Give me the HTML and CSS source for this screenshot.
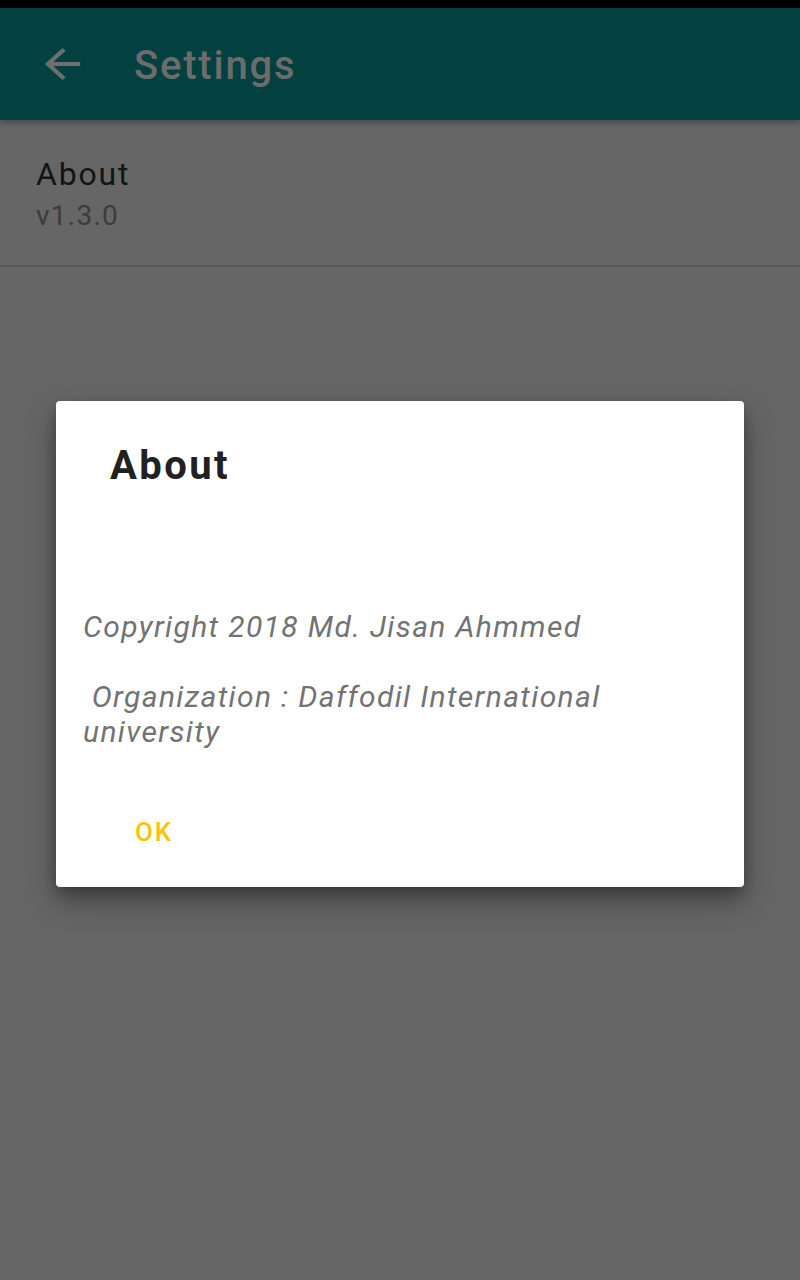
FILE: index.html
```html
<!DOCTYPE html>
<html>
<head>
<meta charset="utf-8">
<link rel="stylesheet" href="styles.css">
</head>
<body>
<div class="statusbar"></div>
<header class="toolbar">
  <div class="nav-icon">
    <svg viewBox="0 0 24 24" width="53" height="48" preserveAspectRatio="none"><path d="M20 11H7.83l5.59-5.59L12 4l-8 8 8 8 1.41-1.41L7.83 13H20v-2z" fill="currentColor"/></svg>
  </div>
  <div class="toolbar-title">Settings</div>
</header>
<main class="prefs">
  <div class="pref-item">
    <div class="pref-title">About</div>
    <div class="pref-summary">v1.3.0</div>
  </div>
</main>
<div class="overlay">
  <div class="dialog">
    <div class="dialog-title">About</div>
    <div class="dialog-body">Copyright 2018 Md. Jisan Ahmmed<br><br>&nbsp;Organization : Daffodil International university</div>
    <div class="dialog-actions">
      <span class="btn">OK</span>
    </div>
  </div>
</div>
</body>
</html>
```

FILE: styles.css
```css
html, body {
  margin: 0;
  padding: 0;
}
body {
  width: 800px;
  height: 1280px;
  background: #666666;
  font-family: Roboto, "Noto Sans", sans-serif;
  overflow: hidden;
  position: relative;
}
.statusbar {
  height: 8px;
  background: #000;
}
.toolbar {
  height: 112px;
  background: #034040;
  display: flex;
  align-items: center;
  box-shadow: 0 3px 5px rgba(0,0,0,0.25);
  position: relative;
  z-index: 1;
}
.nav-icon {
  width: 53px;
  height: 48px;
  margin-left: 36px;
  color: #6e6e6e;
  display: flex;
}
.toolbar-title {
  margin-left: 45px;
  margin-top: 4px;
  font-size: 40px;
  font-weight: 500;
  letter-spacing: 0.045em;
  color: #6c6c6c;
  line-height: 48px;
}
.prefs {
  display: flex;
  flex-direction: column;
}
.pref-item {
  padding: 34px 36px 31px;
  border-bottom: 2px solid #575757;
}
.pref-title {
  font-size: 32px;
  line-height: 40px;
  letter-spacing: 0.056em;
  color: #141414;
}
.pref-summary {
  font-size: 28px;
  line-height: 36px;
  margin-top: 4px;
  letter-spacing: 0.045em;
  color: #3c3c3c;
}
.overlay {
  position: absolute;
  left: 0;
  top: 8px;
  right: 0;
  bottom: 0;
  display: flex;
  align-items: center;
  justify-content: center;
}
.dialog {
  width: 688px;
  height: 486px;
  box-sizing: border-box;
  background: #fff;
  border-radius: 4px;
  box-shadow: 0 14px 30px rgba(0,0,0,0.35), 0 6px 12px rgba(0,0,0,0.2);
  padding: 41px 24px 0 27px;
  display: flex;
  flex-direction: column;
}
.dialog-title {
  margin-left: 27px;
  font-size: 40px;
  line-height: 48px;
  font-weight: 700;
  letter-spacing: 0.06em;
  color: #212121;
}
.dialog-body {
  margin-top: 119px;
  font-size: 30px;
  line-height: 35px;
  font-style: italic;
  letter-spacing: 0.045em;
  color: #737373;
}
.dialog-actions {
  margin-top: 67px;
  display: flex;
}
.btn {
  margin-left: 52px;
  font-size: 26px;
  line-height: 32px;
  font-weight: 500;
  letter-spacing: 0.07em;
  color: #FFC107;
}
```
